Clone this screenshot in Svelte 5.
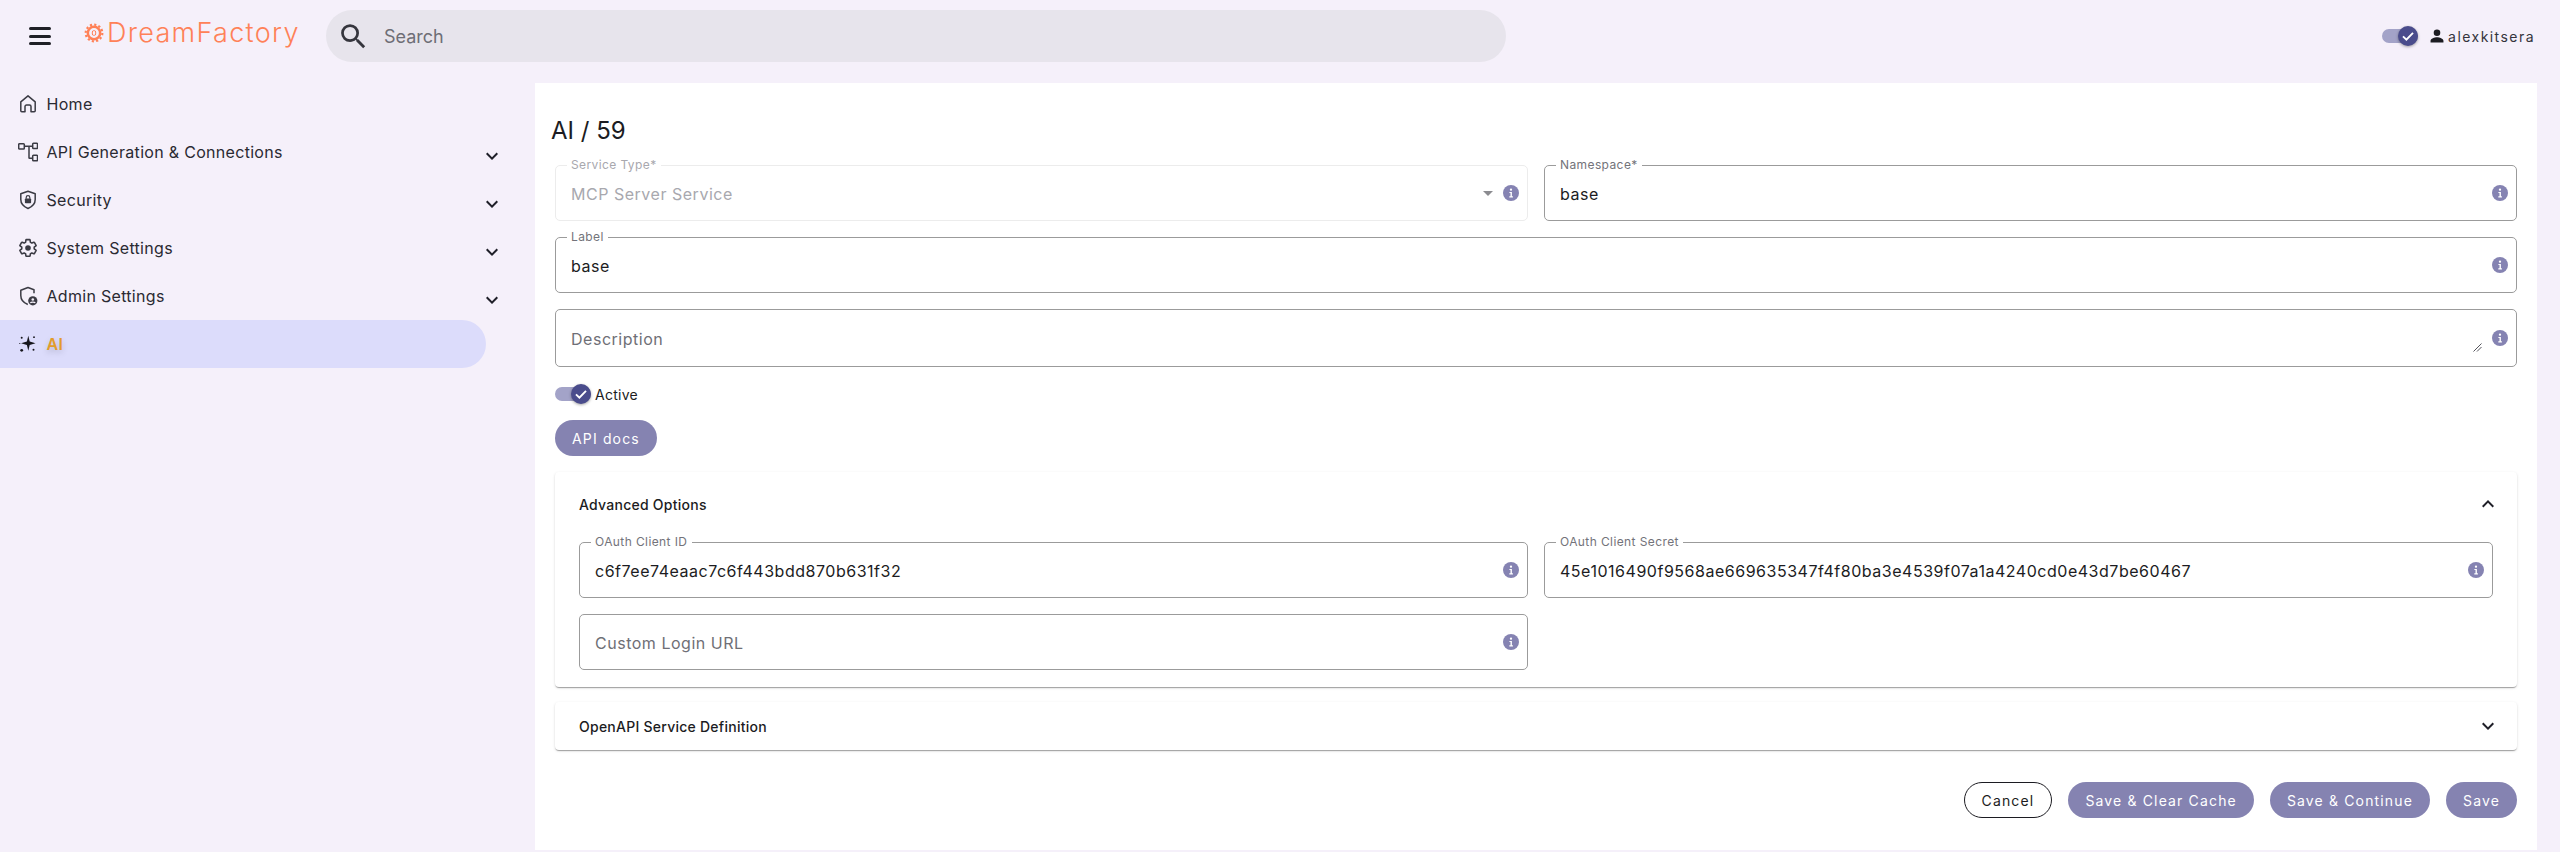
<script>
  const nav = [
    { id: 'home', label: 'Home', more: false },
    { id: 'api', label: 'API Generation & Connections', more: true },
    { id: 'security', label: 'Security', more: true },
    { id: 'system', label: 'System Settings', more: true },
    { id: 'admin', label: 'Admin Settings', more: true }
  ];
</script>

{#snippet info()}
  <svg class="info" viewBox="0 0 16 16" aria-hidden="true">
    <circle cx="8" cy="8" r="8" fill="#8583b2" />
    <circle cx="8" cy="4.7" r="1.15" fill="#fff" />
    <path d="M6.4 7h2.5v4.3h1v1.1H6.300v-1.100h1.200V8.100H6.400z" fill="#fff" />
  </svg>
{/snippet}

{#snippet toggle()}
  <span class="toggle">
    <span class="thumb">
      <svg viewBox="0 0 20 20" aria-hidden="true"><path d="M5 10.400l3.400 3.300L15 6.800" fill="none" stroke="#fff" stroke-width="1.900" /></svg>
    </span>
  </span>
{/snippet}

{#snippet chevron(up)}
  <svg class="chev" class:up viewBox="0 0 24 24" aria-hidden="true"><path d="M7.410 8.590 12 13.170l4.590-4.580L18 10l-6 6-6-6z" fill="#1f1f28" /></svg>
{/snippet}

{#snippet field(label, value, cls = '')}
  <div class="field {cls}">
    {#if value}<span class="float">{label}</span><span class="value">{value}</span>
    {:else}<span class="value ph">{label}</span>{/if}
    {#if cls.includes('select')}<span class="arrow"></span>{/if}
    {#if cls.includes('area')}
      <svg class="grip" viewBox="0 0 9 9" aria-hidden="true"><path d="M8.500.500.500 8.500M8.500 4 4 8.500" stroke="#55555c" fill="none" /></svg>
    {/if}
    {@render info()}
  </div>
{/snippet}

<div class="page">
  <header>
    <button class="burger" aria-label="Menu"><span></span><span></span><span></span></button>
    <div class="logo">
      <svg viewBox="0 0 24 24" aria-hidden="true">
        <circle cx="12" cy="12" r="7.400" fill="none" stroke="#ff8157" stroke-width="3" />
        <circle cx="12" cy="12" r="10" fill="none" stroke="#ff8157" stroke-width="2.600" stroke-dasharray="2.600 2.630" />
        <rect x="10" y="9.200" width="4" height="5.600" rx="1.600" fill="none" stroke="#ff8157" stroke-width="1.200" />
      </svg>
      <span>DreamFactory</span>
    </div>
    <div class="search">
      <svg viewBox="0 0 24 24" aria-hidden="true"><path fill="#35353d" d="M15.500 14h-.790l-.280-.270A6.470 6.470 0 0 0 16 9.500 6.500 6.500 0 1 0 9.500 16c1.610 0 3.090-.590 4.230-1.570l.270.280v.790l5 4.990L20.490 19l-4.990-5zm-6 0C7.010 14 5 11.990 5 9.500S7.010 5 9.500 5 14 7.010 14 9.500 11.990 14 9.500 14z"/></svg>
      <span>Search</span>
    </div>
    <div class="user">
      {@render toggle()}
      <svg class="person" viewBox="0 0 24 24" aria-hidden="true"><path fill="#1c1c22" d="M12 12a4.400 4.400 0 1 0 0-8.800 4.400 4.400 0 0 0 0 8.800zm0 1.600c-3.200 0-8.600 1.600-8.600 4.800v2.200h17.200v-2.200c0-3.200-5.400-4.800-8.600-4.800z"/></svg>
      <span>alexkitsera</span>
    </div>
  </header>

  <div class="body">
    <nav>
      {#each nav as item}
        <div class="item">
          <svg class="icon" viewBox="0 0 20 20" fill="none" stroke="#3b3b44" stroke-width="1.500" aria-hidden="true">
            {#if item.id === 'home'}
              <path d="M2.800 7.800 10 1.800l7.200 6v9a1 1 0 0 1-1 1H13v-5.300a1.500 1.500 0 0 0-1.500-1.500h-3A1.500 1.500 0 0 0 7 12.500v5.300H3.800a1 1 0 0 1-1-1z" stroke-linejoin="round" />
            {:else if item.id === 'api'}
              <rect x=".7" y="1.700" width="5.600" height="5.300" rx=".8" />
              <rect x="14.700" y="1.200" width="4.800" height="5.300" rx=".8" />
              <rect x="14.700" y="13.200" width="4.800" height="5.600" rx=".8" />
              <path d="M6.300 4.300h8.400M11 4.300v11.500c0 .3.200.5.500.5h3.200" />
            {:else if item.id === 'security'}
              <path d="M10 1.200 17.200 3.700v5.800c0 4-3 7.200-7.200 9-4.200-1.800-7.200-5-7.200-9V3.700z" stroke-linejoin="round" />
              <rect x="6.900" y="8.500" width="6.200" height="4.800" rx=".8" fill="#3b3b44" stroke="none" />
              <path d="M8.200 8.700V7.400a1.800 1.800 0 0 1 3.600 0v1.300" stroke-width="1.200" />
            {:else if item.id === 'system'}
              <path transform="scale(.833)" stroke-width="1.900" stroke-linejoin="round" d="M19.430 12.980c.040-.320.070-.640.070-.980 0-.340-.030-.660-.070-.980l2.110-1.650c.190-.150.240-.420.120-.640l-2-3.460c-.090-.160-.260-.250-.440-.250-.060 0-.120.010-.170.030l-2.490 1c-.520-.400-1.080-.730-1.690-.980l-.380-2.650C14.460 2.180 14.250 2 14 2h-4c-.250 0-.460.180-.490.420l-.380 2.650c-.610.250-1.170.590-1.690.980l-2.490-1c-.060-.020-.120-.030-.180-.030-.170 0-.340.090-.430.250l-2 3.460c-.130.220-.070.490.120.640l2.110 1.650c-.040.320-.070.650-.070.980 0 .330.030.660.070.980l-2.110 1.650c-.190.150-.240.420-.120.640l2 3.460c.090.160.260.250.440.250.060 0 .120-.010.170-.030l2.490-1c.520.400 1.080.730 1.690.980l.380 2.650c.030.240.240.420.490.420h4c.250 0 .460-.180.490-.420l.380-2.650c.610-.250 1.170-.590 1.690-.980l2.490 1c.060.020.120.030.180.030.170 0 .340-.090.430-.250l2-3.460c.120-.220.070-.490-.120-.640l-2.110-1.650z" />
              <circle cx="10" cy="10" r="2.800" fill="#3b3b44" stroke="none" />
            {:else}
              <path d="M9.800 18.500c-4-1.500-7-4.900-7-8.900V4.200L10 1.500l6 2.200v3.500" stroke-linejoin="round" />
              <circle cx="14.800" cy="14.800" r="4.600" fill="#3b3b44" stroke="none" />
              <circle cx="14.800" cy="13.500" r="1.300" fill="#f5f0fa" stroke="none" />
              <path d="M12.300 17c.6-1.200 4.400-1.200 5 0" stroke="#f5f0fa" stroke-width="1.100" />
            {/if}
          </svg>
          <span class="text">{item.label}</span>
          {#if item.more}{@render chevron(false)}{/if}
        </div>
      {/each}
      <div class="item active">
        <svg class="icon" viewBox="0 0 20 20" aria-hidden="true" fill="#16161c">
          <path d="M10.300 1.800 11.700 7.600 17.500 9.300 11.700 11 10.300 16.800 8.900 11 3.100 9.300 8.900 7.600z" />
          <circle cx="3.700" cy="3.800" r="1" /><circle cx="16" cy="3.200" r=".9" />
          <circle cx="3.700" cy="16.300" r="1.400" /><circle cx="15.500" cy="15.700" r="1" /><circle cx="1.800" cy="9.500" r=".6" />
        </svg>
        <span class="text">AI</span>
      </div>
    </nav>

    <main>
      <h1>AI / 59</h1>
      <div class="grid">
        {@render field('Service Type*', 'MCP Server Service', 'disabled select')}
        {@render field('Namespace*', 'base')}
        {@render field('Label', 'base', 'wide')}
        {@render field('Description', '', 'wide area')}
      </div>
      <div class="active-row">{@render toggle()}<span>Active</span></div>
      <button class="btn docs">API docs</button>

      <section class="card">
        <div class="card-head"><strong>Advanced Options</strong>{@render chevron(true)}</div>
        <div class="grid inner">
          {@render field('OAuth Client ID', 'c6f7ee74eaac7c6f443bdd870b631f32')}
          {@render field('OAuth Client Secret', '45e1016490f9568ae669635347f4f80ba3e4539f07a1a4240cd0e43d7be60467')}
          {@render field('Custom Login URL', '')}
        </div>
      </section>

      <section class="card closed">
        <div class="card-head"><strong>OpenAPI Service Definition</strong>{@render chevron(false)}</div>
      </section>

      <div class="actions">
        <button class="btn outline">Cancel</button>
        <button class="btn">Save &amp; Clear Cache</button>
        <button class="btn">Save &amp; Continue</button>
        <button class="btn">Save</button>
      </div>
    </main>
  </div>
</div>

<style>
  :global(body) { margin: 0; background: #f5f0fa; font-family: Inter, "Liberation Sans", sans-serif; color: #1c1c22; }
  .page { width: 2560px; height: 852px; overflow: hidden; }
  header { height: 72px; display: flex; align-items: center; }
  .burger { width: 22px; height: 18px; margin: 0 0 0 29px; padding: 0; border: 0; background: none; display: flex; flex-direction: column; justify-content: space-between; }
  .burger span { display: block; height: 3px; background: #1f1f26; border-radius: 1.5px; }
  .logo { display: flex; align-items: center; margin: 0 0 6px 33px; width: 242px; color: #ff8157; }
  .logo svg { width: 20px; height: 20px; flex: none; }
  .logo span { font-size: 27px; font-weight: 300; margin-left: 3px; letter-spacing: 1.3px; line-height: 34px; }
  .search { width: 1180px; height: 52px; border-radius: 26px; background: #e7e4ec; display: flex; align-items: center; color: #6e6e76; font-size: 18px; }
  .search svg { width: 33px; height: 33px; margin-left: 11px; flex: none; }
  .search span { margin-left: 14px; }
  .user { margin-left: auto; margin-right: 25px; display: flex; align-items: center; font-size: 14px; letter-spacing: 1.450px; color: #34343c; }
  .person { width: 18px; height: 18px; margin-left: 9.500px; margin-right: 2.500px; }
  .toggle { display: inline-block; position: relative; width: 36px; height: 14px; border-radius: 7px; background: #a3a3c8; flex: none; }
  .thumb { position: absolute; right: 0; top: -3px; width: 20px; height: 20px; border-radius: 50%; background: #4a4c8c; box-shadow: 0 1px 3px rgba(0,0,0,.35); }
  .thumb svg { display: block; width: 20px; height: 20px; }
  .body { display: flex; margin-top: 11px; }
  nav { width: 535px; flex: none; margin-top: -3px; }
  .item { height: 48px; display: flex; align-items: center; font-size: 16px; letter-spacing: .3px; color: #2a2a32; padding-left: 18px; width: 468px; position: relative; }
  .icon { width: 20px; height: 20px; flex: none; }
  .text { margin-left: 8.500px; }
  .item .chev { position: absolute; left: 480px; top: 16px; }
  .chev { width: 24px; height: 24px; flex: none; }
  .chev.up { transform: rotate(180deg); }
  .item.active { background: #dcdcfb; border-radius: 0 24px 24px 0; }
  .active .text { color: #e29c2a; font-weight: 600; text-shadow: 0 3px 6px rgba(0,0,0,.18); }
  main { width: 2002px; height: 767px; box-sizing: border-box; background: #fff; padding: 31px 20px 0; }
  h1 { margin: 0 0 17px -4px; font-size: 24px; line-height: 34px; font-weight: 400; height: 34px; color: #1c1c22; }
  .grid { display: grid; grid-template-columns: 1fr 1fr; gap: 16px; }
  .field { position: relative; height: 56px; box-sizing: border-box; border: 1.500px solid #9b9b9b; border-radius: 5px; display: flex; align-items: center; padding: 1px 15px 0; font-size: 16px; letter-spacing: .52px; background: #fff; }
  .wide { grid-column: 1 / -1; }
  .area { height: 58px; }
  .float { position: absolute; left: 10.500px; top: -8px; padding: 0 4.500px; background: #fff; font-size: 12px; line-height: 14px; color: #73737a; letter-spacing: .4px; }
  .value { white-space: nowrap; color: #1c1c22; }
  .ph { color: #6f6f76; }
  .disabled { border: 1px solid #ececec; }
  .disabled .float, .disabled .value { color: #a8a8ae; }
  .info { position: absolute; right: 8px; top: 50%; margin-top: -8px; width: 16px; height: 16px; }
  .arrow { position: absolute; right: 34px; top: 25px; border: 5px solid transparent; border-top: 5px solid #8b8b90; border-bottom: 0; }
  .grip { position: absolute; right: 34.500px; bottom: 14.500px; width: 9px; height: 9px; }
  .active-row { display: flex; align-items: center; margin-top: 17px; height: 20px; font-size: 14px; letter-spacing: .25px; }
  .active-row span:last-child { margin-left: 4px; }
  .btn { height: 36px; padding: 0 17px; border: 0; border-radius: 18px; background: #8583b1; color: #fff; font: 400 14px Inter, sans-serif; letter-spacing: 1.15px; }
  .docs { margin-top: 16px; display: block; }
  .card { margin-top: 16px; border-radius: 4px; background: #fff; box-shadow: 0 2px 1px -1px rgba(0,0,0,.2), 0 1px 1px rgba(0,0,0,.14), 0 1px 3px rgba(0,0,0,.12); padding-bottom: 17px; }
  .card-head { height: 64px; box-sizing: border-box; padding: 0 17px 0 24px; display: flex; justify-content: space-between; align-items: center; }
  .card-head strong { font-size: 14px; font-weight: 500; letter-spacing: .25px; }
  .inner { padding: 6px 24px 0; }
  .closed { margin-top: 15px; padding-bottom: 0; }
  .closed .card-head { height: 48px; }
  .actions { margin-top: 32px; display: flex; justify-content: flex-end; gap: 16px; }
  .outline { background: #fff; color: #1c1c22; border: 1px solid #1c1c22; }
</style>
